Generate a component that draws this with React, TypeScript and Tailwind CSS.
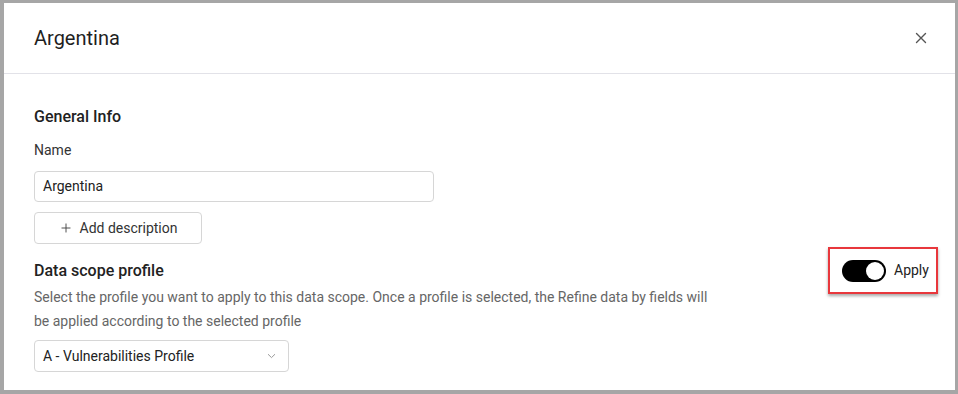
import { Plus } from "lucide-react";

const font = { fontFamily: "Roboto, 'Liberation Sans', sans-serif" };

function CloseIcon() {
    return (
        <svg width="12" height="12" viewBox="0 0 12 12" fill="none">
            <path d="M1.5 1.5L10.5 10.5M10.5 1.5L1.5 10.5" stroke="#555" strokeWidth="1.4" strokeLinecap="round" />
        </svg>
    );
}

function Chevron() {
    return (
        <svg width="9" height="6" viewBox="0 0 9 6" fill="none">
            <path d="M1 1.2L4.5 4.6L8 1.2" stroke="#9a9a9a" strokeWidth="1" />
        </svg>
    );
}

export default function App() {
    return (
        <div className="w-[958px] h-[394px] bg-[#a6a6a6] pl-[4px] pt-[3px]" style={font}>
            <div className="w-[951px] h-[387px] bg-white flex flex-col">
                {/* header */}
                <div className="h-[71px] shrink-0 flex items-center justify-between pl-[30px] pr-[27px] border-b border-[#e2e2e8]">
                    <h1 className="text-[20px] leading-[26px] text-[#1f1f1f]">Argentina</h1>
                    <button className="w-[14px] h-[14px] flex items-center justify-center">
                        <CloseIcon />
                    </button>
                </div>

                {/* body */}
                <div className="pl-[30px] pr-[17px] pt-[33px]">
                    <h2 className="text-[16px] leading-[20px] font-medium text-[#222]">General Info</h2>
                    <p className="mt-[13px] text-[14px] leading-[20px] text-[#333]">Name</p>
                    <div className="mt-[11px] w-[400px] h-[31px] border border-[#d6d6d6] rounded-[4px] flex items-center px-[8px] text-[14px] text-[#222]">
                        Argentina
                    </div>
                    <button className="mt-[10px] w-[168px] h-[32px] border border-[#d6d6d6] rounded-[4px] flex items-center justify-center gap-[7px] text-[14px] text-[#333]">
                        <Plus size={14} strokeWidth={1.6} className="text-[#444]" />
                        Add description
                    </button>

                    <div className="mt-[17px] flex items-start justify-between">
                        <div>
                            <h2 className="text-[16px] leading-[20px] font-medium text-[#222]">Data scope profile</h2>
                            <p className="mt-[4px] w-[690px] text-[14px] leading-[24px] text-[#666]">
                                Select the profile you want to apply to this data scope. Once a profile is selected, the Refine data by fields will be applied according to the selected profile
                            </p>
                            <div className="mt-[7px] w-[255px] h-[32px] border border-[#d6d6d6] rounded-[4px] flex items-center justify-between pl-[8px] pr-[12px] text-[14px] text-[#222]">
                                A - Vulnerabilities Profile
                                <Chevron />
                            </div>
                        </div>
                        <div className="-mt-[14px] w-[110px] h-[47px] border-2 border-[#e8373c] shadow-[0_2px_3px_rgba(0,0,0,0.35)] flex items-center pl-[12px] gap-[8px]">
                            <div className="w-[44px] h-[22px] rounded-full bg-black flex items-center justify-end pr-[2px]">
                                <div className="w-[18px] h-[18px] rounded-full bg-white" />
                            </div>
                            <span className="text-[14px] text-[#222]">Apply</span>
                        </div>
                    </div>
                </div>
            </div>
        </div>
    );
}
